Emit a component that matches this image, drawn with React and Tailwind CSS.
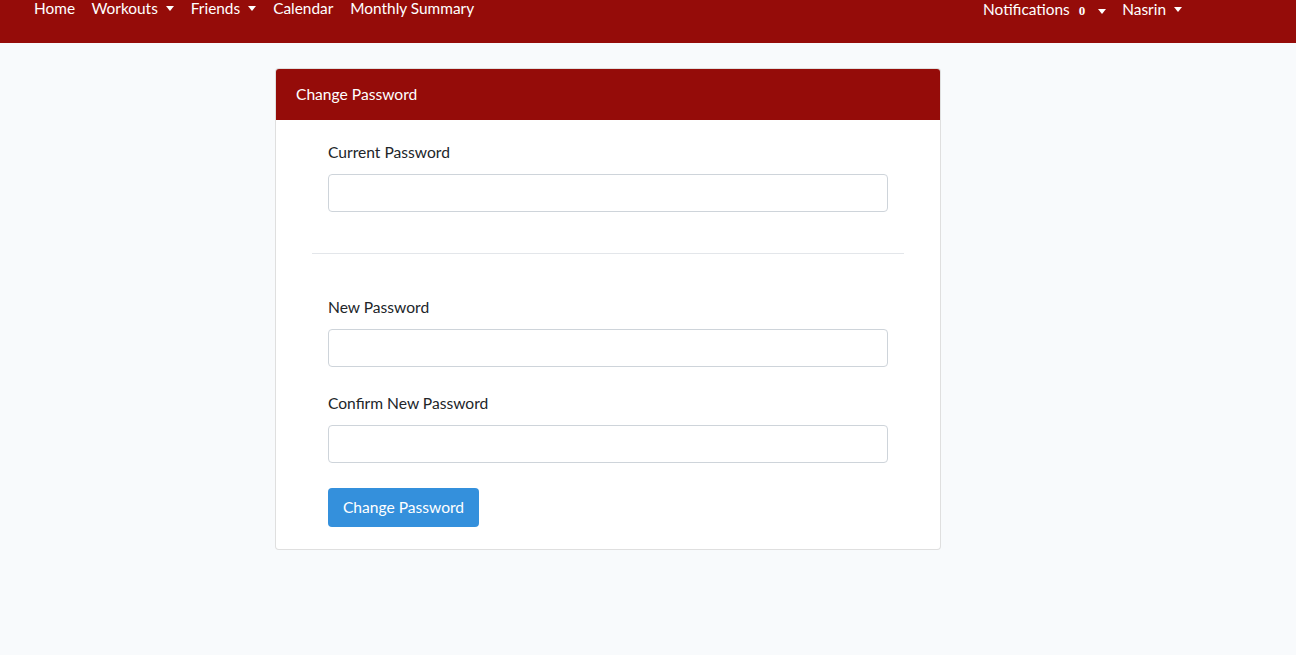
import React from 'react';

const Caret = () => (
  <span className="ml-[8px] inline-block h-0 w-0 border-x-[4.5px] border-t-[5px] border-x-transparent border-t-white align-middle" />
);

const Field = ({ label }) => (
  <div>
    <label className="block text-[15.6px] leading-[23px] text-[#212529]">{label}</label>
    <input
      type="password"
      className="mt-[10px] block h-[38px] w-full rounded-[4px] border border-[#ced4da] bg-white px-3 outline-none"
    />
  </div>
);

const App = () => {
  return (
    <div className="min-h-[655px] bg-[#f8fafc]" style={{ fontFamily: 'Lato, "Noto Sans", sans-serif' }}>
      <nav className="flex h-[43px] items-start justify-between bg-[#950c09] px-[26px] text-[15.4px] leading-[17px] text-white">
        <ul className="flex">
          <li className="px-[8px]">Home</li>
          <li className="flex items-center px-[8.5px]">Workouts<Caret /></li>
          <li className="flex items-center px-[8.5px]">Friends<Caret /></li>
          <li className="px-[8.5px]">Calendar</li>
          <li className="px-[8.5px]">Monthly Summary</li>
        </ul>
        <ul className="mr-[80px] flex">
          <li className="flex items-center px-[8px]">
            Notifications
            <span className="ml-[9px] mt-[2px] text-[13px] font-bold" style={{ fontFamily: '"Liberation Serif", serif' }}>0</span>
            <span className="ml-[5px]"><Caret /></span>
          </li>
          <li className="flex items-center px-[8px]">Nasrin<Caret /></li>
        </ul>
      </nav>

      <main className="flex justify-center pt-[25px]">
        <div className="ml-[-80px] w-[666px] overflow-hidden rounded-[4px] border border-[rgba(0,0,0,0.125)] bg-white">
          <div className="flex h-[51px] items-center bg-[#950c09] px-[20px] text-[15.6px] text-white">
            Change Password
          </div>
          <div className="px-[36px] pb-[22px] pt-[21px]">
            <div className="px-[16px]">
              <Field label="Current Password" />
            </div>
            <hr className="mt-[41px] border-t border-[#e3e6ea]" />
            <div className="flex flex-col gap-[25px] px-[16px] pt-[42px]">
              <Field label="New Password" />
              <Field label="Confirm New Password" />
              <div className="pt-0">
                <button className="h-[39px] w-[151px] rounded-[4px] bg-[#3490dc] text-[15.6px] text-white">
                  Change Password
                </button>
              </div>
            </div>
          </div>
        </div>
      </main>
    </div>
  );
};

export default App;
